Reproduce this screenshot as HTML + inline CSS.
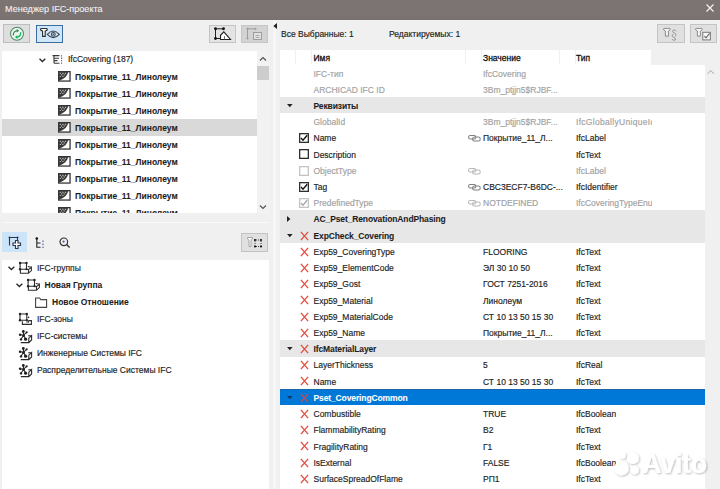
<!DOCTYPE html><html><head><meta charset="utf-8"><title>IFC</title><style>
*{margin:0;padding:0;box-sizing:border-box}
html,body{width:720px;height:489px;overflow:hidden;background:#f0f0f0;font-family:"Liberation Sans",sans-serif;font-size:8.5px;color:#1e1e1e}
.a{position:absolute}
.t{position:absolute;white-space:nowrap;line-height:12px;-webkit-text-stroke:0.16px currentColor}
.b{font-weight:bold;-webkit-text-stroke:0.06px currentColor}
.g{color:#a2a2a2}
svg{position:absolute;overflow:visible}
</style></head><body>
<div class="a" style="left:0;top:0;width:720px;height:19.5px;background:linear-gradient(#7c7473 0,#7b7372 15px,#767270 19.5px)"></div>
<div class="t " style="left:5px;top:3px;color:#f2f2f2;font-size:9.1px;-webkit-text-stroke:0.1px #f2f2f2">Менеджер IFC-проекта</div>
<svg style="left:706px;top:4px" width="8" height="8"><path d="M0.5 0.5L7.5 7.5M7.5 0.5L0.5 7.5" stroke="#f4f4f4" stroke-width="1.2"/></svg>
<div class="a" style="left:3px;top:24px;width:27px;height:19px;background:#dedede;border:1px solid #bdbdbd"></div>
<div class="a" style="left:35.5px;top:24.5px;width:27.2px;height:18.5px;background:#d0e7f9;border:1.4px solid #3d6d9e"></div>
<div class="a" style="left:209px;top:24.5px;width:27px;height:18.5px;background:#e4e4e4;border:1px solid #c4c4c4"></div>
<div class="a" style="left:241px;top:24.5px;width:27px;height:18.5px;background:#d3d3d3;border:1px solid #c6c6c6"></div>
<svg style="left:10px;top:27px" width="14" height="14"><circle cx="7" cy="6.8" r="6.5" fill="#e8f6ec" stroke="#4a8a64" stroke-width="1.05"/><path d="M3.3 8.6 Q3.2 4.1 7 3.7" fill="none" stroke="#3b7d55" stroke-width="1.15"/><path d="M6.7 2L9.2 3.7L6.7 5.4Z" fill="#3b7d55"/><path d="M10.7 5.2 Q10.8 9.6 7.2 10.1" fill="none" stroke="#17b25a" stroke-width="1.35"/><path d="M7.5 8.3L4.9 10.1L7.5 11.9Z" fill="#17b25a"/></svg>
<svg style="left:39.5px;top:28px" width="21" height="11"><path d="M0.6 1.2Q0.6 0.5 1.4 0.5H6.4Q7.2 0.5 7.2 1.2V2L5.2 3.2V8.3H2.6V3.2L0.6 2Z" fill="#fff" stroke="#2e2e2e" stroke-width="1.15"/><path d="M7.3 6.3Q13.2 -0.4 19.3 6.3Q13.2 12.9 7.3 6.3Z" fill="none" stroke="#3a4350" stroke-width="1.15"/><circle cx="13.3" cy="6.3" r="1.9" fill="#dbe9f5" stroke="#3a4350" stroke-width="1.05"/><circle cx="13.3" cy="6.3" r="0.75" fill="#3a4350"/></svg>
<svg style="left:213.5px;top:27px" width="20" height="14"><path d="M1.5 1.8H9.5M1.5 1.8V11.5H6.2" fill="none" stroke="#222" stroke-width="1"/><circle cx="1.5" cy="1.8" r="1.45" fill="#111"/><circle cx="9.5" cy="1.8" r="1.45" fill="#111"/><circle cx="1.5" cy="11.5" r="1.45" fill="#111"/><path d="M6.5 12.5V8.3L9.8 4.8L16.5 12.5Z" fill="#fff" stroke="#222" stroke-width="1.1"/><path d="M10.5 12.5V9" stroke="#555" stroke-width="0.8"/></svg>
<svg style="left:246px;top:27px" width="18" height="14"><path d="M1.5 1.8H9.5M1.5 1.8V11.5" fill="none" stroke="#9e9e9e" stroke-width="1"/><circle cx="1.5" cy="1.8" r="1" fill="#9a9a9a"/><circle cx="9.5" cy="1.8" r="1" fill="#9a9a9a"/><circle cx="1.5" cy="11.5" r="1" fill="#9a9a9a"/><rect x="7.5" y="5.5" width="8" height="7" fill="#e2e2e2" stroke="#9e9e9e"/><path d="M9.5 8.5H13.5M9.5 10.5H13.5" stroke="#aaa"/></svg>
<div class="a" style="left:2px;top:51px;width:255px;height:162px;background:#fff"></div>
<div class="a" style="left:257px;top:51px;width:12px;height:162px;background:#f2f2f2"></div>
<div class="a" style="left:257px;top:66px;width:12px;height:14px;background:#cdcdcd"></div>
<svg style="left:259px;top:55.5px" width="8" height="6"><path d="M1 4.5L4 1.5L7 4.5" fill="none" stroke="#555" stroke-width="1.2"/></svg>
<svg style="left:259px;top:204px" width="8" height="6"><path d="M1 1.5L4 4.5L7 1.5" fill="none" stroke="#555" stroke-width="1.2"/></svg>
<div class="a" style="left:2px;top:119px;width:255px;height:17px;background:#d9d9d9"></div>
<svg style="left:39px;top:57.5px" width="7" height="5"><path d="M0.5 0.7L3.4 3.6L6.3 0.7" fill="none" stroke="#2a2a2a" stroke-width="1.35"/></svg>
<svg style="left:51.5px;top:55px" width="11" height="9"><path d="M0.5 0.6H7.5M2 0.6V8.2M2 3.2H7M2 5.6H5.5M2 8.2H7.5" fill="none" stroke="#3a3a3a" stroke-width="1.1"/><path d="M9.6 0.2V9" stroke="#4a5a9a" stroke-width="1.1" stroke-dasharray="1.3 1.1"/></svg>
<div class="t " style="left:68px;top:53px;">IfcCovering (187)</div>
<svg style="left:58px;top:71px" width="13" height="11"><rect x="0.65" y="0.65" width="11.4" height="9.4" fill="#fff" stroke="#363636" stroke-width="1.3"/><path d="M0.7 0.7H10.2Q9.6 6.2 1.8 9.4H0.7Z" fill="#3a3a3a"/><path d="M1.7 1.7h1.2v1.2h-1.2zM4.3 1.7h1.2v1.2h-1.2zM6.9 1.7h1.2v1.2h-1.2zM3 3.3h1.2v1.2h-1.2zM5.6 3.3h1.2v1.2h-1.2zM1.7 4.9h1.2v1.2h-1.2zM4.3 4.9h1.2v1.2h-1.2z" fill="#b8b8b8"/></svg>
<div class="t b" style="left:75px;top:70.5px;">Покрытие_11_Линолеум</div>
<svg style="left:58px;top:88px" width="13" height="11"><rect x="0.65" y="0.65" width="11.4" height="9.4" fill="#fff" stroke="#363636" stroke-width="1.3"/><path d="M0.7 0.7H10.2Q9.6 6.2 1.8 9.4H0.7Z" fill="#3a3a3a"/><path d="M1.7 1.7h1.2v1.2h-1.2zM4.3 1.7h1.2v1.2h-1.2zM6.9 1.7h1.2v1.2h-1.2zM3 3.3h1.2v1.2h-1.2zM5.6 3.3h1.2v1.2h-1.2zM1.7 4.9h1.2v1.2h-1.2zM4.3 4.9h1.2v1.2h-1.2z" fill="#b8b8b8"/></svg>
<div class="t b" style="left:75px;top:87.5px;">Покрытие_11_Линолеум</div>
<svg style="left:58px;top:105px" width="13" height="11"><rect x="0.65" y="0.65" width="11.4" height="9.4" fill="#fff" stroke="#363636" stroke-width="1.3"/><path d="M0.7 0.7H10.2Q9.6 6.2 1.8 9.4H0.7Z" fill="#3a3a3a"/><path d="M1.7 1.7h1.2v1.2h-1.2zM4.3 1.7h1.2v1.2h-1.2zM6.9 1.7h1.2v1.2h-1.2zM3 3.3h1.2v1.2h-1.2zM5.6 3.3h1.2v1.2h-1.2zM1.7 4.9h1.2v1.2h-1.2zM4.3 4.9h1.2v1.2h-1.2z" fill="#b8b8b8"/></svg>
<div class="t b" style="left:75px;top:104.5px;">Покрытие_11_Линолеум</div>
<svg style="left:58px;top:122px" width="13" height="11"><rect x="0.65" y="0.65" width="11.4" height="9.4" fill="#fff" stroke="#363636" stroke-width="1.3"/><path d="M0.7 0.7H10.2Q9.6 6.2 1.8 9.4H0.7Z" fill="#3a3a3a"/><path d="M1.7 1.7h1.2v1.2h-1.2zM4.3 1.7h1.2v1.2h-1.2zM6.9 1.7h1.2v1.2h-1.2zM3 3.3h1.2v1.2h-1.2zM5.6 3.3h1.2v1.2h-1.2zM1.7 4.9h1.2v1.2h-1.2zM4.3 4.9h1.2v1.2h-1.2z" fill="#b8b8b8"/></svg>
<div class="t b" style="left:75px;top:121.5px;">Покрытие_11_Линолеум</div>
<svg style="left:58px;top:139px" width="13" height="11"><rect x="0.65" y="0.65" width="11.4" height="9.4" fill="#fff" stroke="#363636" stroke-width="1.3"/><path d="M0.7 0.7H10.2Q9.6 6.2 1.8 9.4H0.7Z" fill="#3a3a3a"/><path d="M1.7 1.7h1.2v1.2h-1.2zM4.3 1.7h1.2v1.2h-1.2zM6.9 1.7h1.2v1.2h-1.2zM3 3.3h1.2v1.2h-1.2zM5.6 3.3h1.2v1.2h-1.2zM1.7 4.9h1.2v1.2h-1.2zM4.3 4.9h1.2v1.2h-1.2z" fill="#b8b8b8"/></svg>
<div class="t b" style="left:75px;top:138.5px;">Покрытие_11_Линолеум</div>
<svg style="left:58px;top:156px" width="13" height="11"><rect x="0.65" y="0.65" width="11.4" height="9.4" fill="#fff" stroke="#363636" stroke-width="1.3"/><path d="M0.7 0.7H10.2Q9.6 6.2 1.8 9.4H0.7Z" fill="#3a3a3a"/><path d="M1.7 1.7h1.2v1.2h-1.2zM4.3 1.7h1.2v1.2h-1.2zM6.9 1.7h1.2v1.2h-1.2zM3 3.3h1.2v1.2h-1.2zM5.6 3.3h1.2v1.2h-1.2zM1.7 4.9h1.2v1.2h-1.2zM4.3 4.9h1.2v1.2h-1.2z" fill="#b8b8b8"/></svg>
<div class="t b" style="left:75px;top:155.5px;">Покрытие_11_Линолеум</div>
<svg style="left:58px;top:173px" width="13" height="11"><rect x="0.65" y="0.65" width="11.4" height="9.4" fill="#fff" stroke="#363636" stroke-width="1.3"/><path d="M0.7 0.7H10.2Q9.6 6.2 1.8 9.4H0.7Z" fill="#3a3a3a"/><path d="M1.7 1.7h1.2v1.2h-1.2zM4.3 1.7h1.2v1.2h-1.2zM6.9 1.7h1.2v1.2h-1.2zM3 3.3h1.2v1.2h-1.2zM5.6 3.3h1.2v1.2h-1.2zM1.7 4.9h1.2v1.2h-1.2zM4.3 4.9h1.2v1.2h-1.2z" fill="#b8b8b8"/></svg>
<div class="t b" style="left:75px;top:172.5px;">Покрытие_11_Линолеум</div>
<svg style="left:58px;top:190px" width="13" height="11"><rect x="0.65" y="0.65" width="11.4" height="9.4" fill="#fff" stroke="#363636" stroke-width="1.3"/><path d="M0.7 0.7H10.2Q9.6 6.2 1.8 9.4H0.7Z" fill="#3a3a3a"/><path d="M1.7 1.7h1.2v1.2h-1.2zM4.3 1.7h1.2v1.2h-1.2zM6.9 1.7h1.2v1.2h-1.2zM3 3.3h1.2v1.2h-1.2zM5.6 3.3h1.2v1.2h-1.2zM1.7 4.9h1.2v1.2h-1.2zM4.3 4.9h1.2v1.2h-1.2z" fill="#b8b8b8"/></svg>
<div class="t b" style="left:75px;top:189.5px;">Покрытие_11_Линолеум</div>
<svg style="left:58px;top:207px" width="13" height="11"><rect x="0.65" y="0.65" width="11.4" height="9.4" fill="#fff" stroke="#363636" stroke-width="1.3"/><path d="M0.7 0.7H10.2Q9.6 6.2 1.8 9.4H0.7Z" fill="#3a3a3a"/><path d="M1.7 1.7h1.2v1.2h-1.2zM4.3 1.7h1.2v1.2h-1.2zM6.9 1.7h1.2v1.2h-1.2zM3 3.3h1.2v1.2h-1.2zM5.6 3.3h1.2v1.2h-1.2zM1.7 4.9h1.2v1.2h-1.2zM4.3 4.9h1.2v1.2h-1.2z" fill="#b8b8b8"/></svg>
<div class="t b" style="left:75px;top:206.5px;">Покрытие_11_Линолеум</div>
<div class="a" style="left:0;top:213px;width:269px;height:47px;background:#f0f0f0"></div>
<div class="a" style="left:2px;top:222px;width:267px;height:1px;background:#f9f9f9"></div>
<div class="a" style="left:2px;top:232px;width:25px;height:20px;background:#cce4f7"></div>
<svg style="left:8px;top:235.5px" width="14" height="14"><path d="M1.5 9.5V1.5H9.5V4.5" fill="none" stroke="#2a3550" stroke-width="1.1"/><circle cx="1.5" cy="1.5" r="0.9" fill="#2a3550"/><circle cx="9.5" cy="1.5" r="0.9" fill="#2a3550"/><path d="M7.5 4.5H10V7H12.5V9.5H10V12.5H7.5V9.5H5V7H7.5Z" fill="#fff" stroke="#2a3550" stroke-width="1.1"/></svg>
<svg style="left:35px;top:236.5px" width="10" height="12"><circle cx="1.8" cy="1.5" r="1.3" fill="#111"/><path d="M1.8 1.5V10.3H5.5M1.8 6H5.5" fill="none" stroke="#222" stroke-width="1.1"/><path d="M8 3.5V5M8 6.5V8M8 9.5V11" stroke="#4a5aa0" stroke-width="1.1"/></svg>
<svg style="left:58.5px;top:236.5px" width="12" height="12"><circle cx="4.8" cy="4.8" r="3.8" fill="none" stroke="#333" stroke-width="1.2"/><circle cx="4.6" cy="4.6" r="1.1" fill="#4a5aa0"/><path d="M7.6 7.6L10.6 10.6" stroke="#333" stroke-width="1.4"/></svg>
<div class="a" style="left:241px;top:233px;width:27px;height:18.5px;background:#e0e0e0;border:1px solid #c2c2c2"></div>
<svg style="left:247px;top:236.5px" width="16" height="12"><path d="M0.5 0.5H5.5V2L4 3.2V9.5H2V3.2L0.5 2Z" fill="#f6f6f6" stroke="#a0a0a0" stroke-width="0.9"/><path d="M9 3H13.5M9 9.5H13.5M8 4V8.5M14 4V8.5" stroke="#333" stroke-width="0.9" stroke-dasharray="1 1"/><circle cx="8" cy="3" r="1.1" fill="#111"/><circle cx="14" cy="3" r="1.1" fill="#111"/><circle cx="8" cy="9.5" r="1.1" fill="#111"/><circle cx="14" cy="9.5" r="1.1" fill="#111"/></svg>
<div class="a" style="left:2px;top:260px;width:267px;height:229px;background:#fff"></div>
<svg style="left:8.2px;top:266.0px" width="7" height="5"><path d="M0.5 0.7L3.4 3.6L6.3 0.7" fill="none" stroke="#2a2a2a" stroke-width="1.35"/></svg>
<svg style="left:19.3px;top:262.0px" width="14" height="13"><path d="M1.1 1H7.5V7.2H1.1Z" fill="none" stroke="#2e2e2e" stroke-width="1.1"/><circle cx="1.1" cy="1" r="1.2" fill="#222"/><circle cx="7.5" cy="1" r="1.2" fill="#222"/><circle cx="1.1" cy="7.2" r="1.2" fill="#222"/><circle cx="7.5" cy="7.2" r="1.1" fill="#222"/><path d="M1.4 7.2V11.2H9.5V7.6L7.5 7.2M9.5 11.2L12.4 8.6V5.2L9.5 7.6M8.8 4.5L12.4 5.2" fill="none" stroke="#2e2e2e" stroke-width="1.1"/></svg>
<div class="t " style="left:37px;top:262.0px;">IFC-группы</div>
<svg style="left:16.3px;top:283.0px" width="7" height="5"><path d="M0.5 0.7L3.4 3.6L6.3 0.7" fill="none" stroke="#2a2a2a" stroke-width="1.35"/></svg>
<svg style="left:27.2px;top:279.0px" width="14" height="13"><path d="M1.1 1H7.5V7.2H1.1Z" fill="none" stroke="#2e2e2e" stroke-width="1.1"/><circle cx="1.1" cy="1" r="1.2" fill="#222"/><circle cx="7.5" cy="1" r="1.2" fill="#222"/><circle cx="1.1" cy="7.2" r="1.2" fill="#222"/><circle cx="7.5" cy="7.2" r="1.1" fill="#222"/><path d="M1.4 7.2V11.2H9.5V7.6L7.5 7.2M9.5 11.2L12.4 8.6V5.2L9.5 7.6M8.8 4.5L12.4 5.2" fill="none" stroke="#2e2e2e" stroke-width="1.1"/></svg>
<div class="t b" style="left:44.5px;top:279.0px;">Новая Группа</div>
<svg style="left:35px;top:296.5px" width="13" height="11"><path d="M0.6 1H4.6L5.8 2.6H11.6V10.4H0.6Z" fill="#fff" stroke="#444" stroke-width="1.1"/></svg>
<div class="t b" style="left:52px;top:296.0px;">Новое Отношение</div>
<svg style="left:19px;top:313.0px" width="14" height="13"><path d="M1 1H7.8V7.2H1Z" fill="none" stroke="#2e2e2e" stroke-width="1.1"/><circle cx="1" cy="1" r="1.2" fill="#222"/><circle cx="7.8" cy="1" r="1.2" fill="#222"/><circle cx="1" cy="7.2" r="1.2" fill="#222"/><circle cx="7.8" cy="7.2" r="1.1" fill="#222"/><circle cx="9.5" cy="4.4" r="0.8" fill="#333"/><path d="M3.4 8.3V11.4H12.4V7.6H9.5M9.5 7.6V9H7.2" fill="none" stroke="#2e2e2e" stroke-width="1.1"/></svg>
<div class="t " style="left:37px;top:313.0px;">IFC-зоны</div>
<svg style="left:19px;top:330.0px" width="14" height="14"><path d="M4.6 5.2L4.3 1.6M4.6 5.2L7.6 2.4M4.6 5.2L1 4.8M4.6 5.2L2 9.2M4.6 5.2L6.4 8.8" fill="none" stroke="#2a2a2a" stroke-width="1.1"/><circle cx="4.6" cy="5.2" r="1.2" fill="#222"/><circle cx="4.3" cy="1.5" r="1.4" fill="#222"/><circle cx="7.7" cy="2.3" r="1.1" fill="#222"/><circle cx="1.1" cy="4.8" r="1.3" fill="#222"/><circle cx="6.6" cy="9.2" r="1.6" fill="#222"/><circle cx="2" cy="9.4" r="1.2" fill="#222"/><path d="M1.8 12.6H9.8L12.6 10V5.6L9.8 8.2V12.6M9.2 5.8H12.6" fill="none" stroke="#2a2a2a" stroke-width="1.1"/></svg>
<div class="t " style="left:37px;top:330.0px;">IFC-системы</div>
<svg style="left:19px;top:347.0px" width="14" height="14"><path d="M4.6 5.2L4.3 1.6M4.6 5.2L7.6 2.4M4.6 5.2L1 4.8M4.6 5.2L2 9.2M4.6 5.2L6.4 8.8" fill="none" stroke="#2a2a2a" stroke-width="1.1"/><circle cx="4.6" cy="5.2" r="1.2" fill="#222"/><circle cx="4.3" cy="1.5" r="1.4" fill="#222"/><circle cx="7.7" cy="2.3" r="1.1" fill="#222"/><circle cx="1.1" cy="4.8" r="1.3" fill="#222"/><circle cx="6.6" cy="9.2" r="1.6" fill="#222"/><circle cx="2" cy="9.4" r="1.2" fill="#222"/><path d="M1.8 12.6H9.8L12.6 10V5.6L9.8 8.2V12.6M9.2 5.8H12.6" fill="none" stroke="#2a2a2a" stroke-width="1.1"/></svg>
<div class="t " style="left:37px;top:347.0px;">Инженерные Системы IFC</div>
<svg style="left:19px;top:364.0px" width="14" height="14"><path d="M4.6 5.2L4.3 1.6M4.6 5.2L7.6 2.4M4.6 5.2L1 4.8M4.6 5.2L2 9.2M4.6 5.2L6.4 8.8" fill="none" stroke="#2a2a2a" stroke-width="1.1"/><circle cx="4.6" cy="5.2" r="1.2" fill="#222"/><circle cx="4.3" cy="1.5" r="1.4" fill="#222"/><circle cx="7.7" cy="2.3" r="1.1" fill="#222"/><circle cx="1.1" cy="4.8" r="1.3" fill="#222"/><circle cx="6.6" cy="9.2" r="1.6" fill="#222"/><circle cx="2" cy="9.4" r="1.2" fill="#222"/><path d="M1.8 12.6H9.8L12.6 10V5.6L9.8 8.2V12.6M9.2 5.8H12.6" fill="none" stroke="#2a2a2a" stroke-width="1.1"/></svg>
<div class="t " style="left:37px;top:364.0px;">Распределительные Системы IFC</div>
<div class="a" style="left:272.5px;top:19.5px;width:3.5px;height:470px;background:#f6f6f6"></div>
<svg style="left:273px;top:23.2px" width="4" height="6"><path d="M4 0L0.3 3L4 6Z" fill="#222"/></svg>
<div class="t " style="left:281px;top:28px;">Все Выбранные: 1</div>
<div class="t " style="left:389px;top:28px;">Редактируемых: 1</div>
<div class="a" style="left:657px;top:24px;width:28px;height:18.5px;background:#e0e0e0;border:1px solid #c4c4c4"></div>
<div class="a" style="left:690px;top:24px;width:27px;height:18.5px;background:#e0e0e0;border:1px solid #c4c4c4"></div>
<svg style="left:662.5px;top:27.5px" width="18" height="13"><path d="M0.6 0.9Q0.6 0.4 1.2 0.4H6.6Q7.2 0.4 7.2 0.9V1.8L5.4 3V8.2H2.4V3L0.6 1.8Z" fill="#f6f6f6" stroke="#8a8a8a" stroke-width="1"/><path d="M13.2 3.2Q12.6 2 11.2 2Q9.6 2 9.6 3.3Q9.6 4.4 11.3 5Q13 5.6 13 6.8Q13 7.8 11.8 8.2M10.4 6.2Q9.2 6.6 9.2 7.8Q9.2 8.8 11 9.5Q12.6 10.1 12.6 11.1Q12.6 12.3 11 12.3Q9.6 12.3 9.2 11.2" fill="none" stroke="#8c8c8c" stroke-width="0.9"/></svg>
<svg style="left:695px;top:27.5px" width="18" height="13"><path d="M0.6 0.9Q0.6 0.4 1.2 0.4H6.6Q7.2 0.4 7.2 0.9V1.8L5.4 3V8.2H2.4V3L0.6 1.8Z" fill="#f6f6f6" stroke="#8a8a8a" stroke-width="1"/><rect x="7.8" y="4.3" width="7.6" height="7.6" fill="#f6f6f6" stroke="#7a7a7a" stroke-width="1"/><path d="M9.3 8L11 9.9L14.6 5.3" fill="none" stroke="#666" stroke-width="1.1"/></svg>
<div class="a" style="left:280px;top:49.5px;width:371px;height:15px;background:#fff"></div>
<div class="a" style="left:295px;top:50px;width:1px;height:14px;background:#f0f0f0"></div>
<div class="a" style="left:311px;top:50px;width:1px;height:14px;background:#f0f0f0"></div>
<div class="a" style="left:465px;top:50px;width:1px;height:14px;background:#f0f0f0"></div>
<div class="a" style="left:481px;top:50px;width:1px;height:14px;background:#f0f0f0"></div>
<div class="a" style="left:559px;top:50px;width:1px;height:14px;background:#f0f0f0"></div>
<div class="a" style="left:575px;top:50px;width:1px;height:14px;background:#f0f0f0"></div>
<div class="t " style="left:313.5px;top:52px;-webkit-text-stroke:0.28px currentColor;color:#111">Имя</div>
<div class="t " style="left:483px;top:52px;-webkit-text-stroke:0.28px currentColor;color:#111">Значение</div>
<div class="t " style="left:576px;top:52px;-webkit-text-stroke:0.28px currentColor;color:#111">Тип</div>
<div class="a" style="left:280px;top:64.5px;width:424.5px;height:425px;background:#fff;overflow:hidden">
<div class="t g" style="left:33.5px;top:3.0px">IFC-тип</div>
<div class="t g" style="left:203px;top:3.0px">IfcCovering</div>
<div class="t g" style="left:33.5px;top:19.22px">ARCHICAD IFC ID</div>
<div class="t g" style="left:203px;top:19.22px">3Bm_ptjjn5$RJBF...</div>
<div class="a" style="left:0;top:32.44px;width:425px;height:16.52px;background:#e7e7e7"></div>
<svg style="left:6.6px;top:39.64px" width="6" height="4"><path d="M0 0H5.6L2.8 3.3Z" fill="#222"/></svg>
<div class="t b" style="left:33.5px;top:35.44px;letter-spacing:-0.12px;">Реквизиты</div>
<div class="t g" style="left:33.5px;top:51.66px">GlobalId</div>
<div class="t g" style="left:203px;top:51.66px">3Bm_ptjjn5$RJBF...</div>
<div class="t g" style="left:296px;top:51.66px;width:75.5px;overflow:hidden;letter-spacing:0.3px">IfcGloballyUniqueId</div>
<svg style="left:19.2px;top:68.68px" width="10" height="10"><rect x="0.65" y="0.65" width="8.7" height="8.7" fill="#fff" stroke="#2e2e2e" stroke-width="1.3"/><path d="M2 5L4 7.2L8.2 2.3" fill="none" stroke="#111" stroke-width="1.4"/></svg>
<div class="t " style="left:33.5px;top:67.88px">Name</div>
<svg style="left:188px;top:70.68px" width="13" height="7"><rect x="0.6" y="0.5" width="7.2" height="3.5" rx="1.6" fill="none" stroke="#808080" stroke-width="1.05"/><rect x="4.6" y="2" width="7.6" height="3.9" rx="1.7" fill="none" stroke="#808080" stroke-width="1.05"/></svg>
<div class="t " style="left:203px;top:67.88px">Покрытие_11_Л...</div>
<div class="t " style="left:296px;top:67.88px;width:75.5px;overflow:hidden;">IfcLabel</div>
<svg style="left:19.2px;top:84.9px" width="10" height="10"><rect x="0.65" y="0.65" width="8.7" height="8.7" fill="#fff" stroke="#2e2e2e" stroke-width="1.3"/></svg>
<div class="t " style="left:33.5px;top:84.1px">Description</div>
<div class="t " style="left:296px;top:84.1px;width:75.5px;overflow:hidden;">IfcText</div>
<svg style="left:19.2px;top:101.12px" width="10" height="10"><rect x="0.65" y="0.65" width="8.7" height="8.7" fill="#fff" stroke="#c4c4c4" stroke-width="1.3"/></svg>
<div class="t g" style="left:33.5px;top:100.32px">ObjectType</div>
<svg style="left:188px;top:103.12px" width="13" height="7"><rect x="0.6" y="0.5" width="7.2" height="3.5" rx="1.6" fill="none" stroke="#b8b8b8" stroke-width="1.05"/><rect x="4.6" y="2" width="7.6" height="3.9" rx="1.7" fill="none" stroke="#b8b8b8" stroke-width="1.05"/></svg>
<div class="t g" style="left:296px;top:100.32px;width:75.5px;overflow:hidden;">IfcLabel</div>
<svg style="left:19.2px;top:117.34px" width="10" height="10"><rect x="0.65" y="0.65" width="8.7" height="8.7" fill="#fff" stroke="#2e2e2e" stroke-width="1.3"/><path d="M2 5L4 7.2L8.2 2.3" fill="none" stroke="#111" stroke-width="1.4"/></svg>
<div class="t " style="left:33.5px;top:116.54px">Tag</div>
<svg style="left:188px;top:119.34px" width="13" height="7"><rect x="0.6" y="0.5" width="7.2" height="3.5" rx="1.6" fill="none" stroke="#808080" stroke-width="1.05"/><rect x="4.6" y="2" width="7.6" height="3.9" rx="1.7" fill="none" stroke="#808080" stroke-width="1.05"/></svg>
<div class="t " style="left:203px;top:116.54px">CBC3ECF7-B6DC-...</div>
<div class="t " style="left:296px;top:116.54px;width:75.5px;overflow:hidden;">IfcIdentifier</div>
<svg style="left:19.2px;top:133.56px" width="10" height="10"><rect x="0.65" y="0.65" width="8.7" height="8.7" fill="#fff" stroke="#c4c4c4" stroke-width="1.3"/><path d="M2 5L4 7.2L8.2 2.3" fill="none" stroke="#a8a8a8" stroke-width="1.4"/></svg>
<div class="t g" style="left:33.5px;top:132.76px">PredefinedType</div>
<svg style="left:188px;top:135.56px" width="13" height="7"><rect x="0.6" y="0.5" width="7.2" height="3.5" rx="1.6" fill="none" stroke="#b8b8b8" stroke-width="1.05"/><rect x="4.6" y="2" width="7.6" height="3.9" rx="1.7" fill="none" stroke="#b8b8b8" stroke-width="1.05"/></svg>
<div class="t g" style="left:203px;top:132.76px">NOTDEFINED</div>
<div class="t g" style="left:296px;top:132.76px;width:75.5px;overflow:hidden;">IfcCoveringTypeEnum</div>
<div class="a" style="left:0;top:145.98px;width:425px;height:16.52px;background:#e7e7e7"></div>
<svg style="left:7.2px;top:151.18px" width="4" height="6"><path d="M0 0V6L3.4 3Z" fill="#222"/></svg>
<div class="t b" style="left:33.5px;top:148.98px;letter-spacing:-0.12px;">AC_Pset_RenovationAndPhasing</div>
<div class="a" style="left:0;top:162.2px;width:425px;height:16.52px;background:#e7e7e7"></div>
<svg style="left:6.6px;top:169.4px" width="6" height="4"><path d="M0 0H5.6L2.8 3.3Z" fill="#222"/></svg>
<svg style="left:20px;top:166.0px" width="9" height="10"><path d="M0.9 0.9L8.1 9.1M8.1 0.9L0.9 9.1" stroke="#e4503f" stroke-width="1.4"/></svg>
<div class="t b" style="left:33.5px;top:165.2px;letter-spacing:-0.12px;">ExpCheck_Covering</div>
<svg style="left:20px;top:182.22px" width="9" height="10"><path d="M0.9 0.9L8.1 9.1M8.1 0.9L0.9 9.1" stroke="#e4503f" stroke-width="1.4"/></svg>
<div class="t " style="left:33.5px;top:181.42px">Exp59_CoveringType</div>
<div class="t " style="left:203px;top:181.42px">FLOORING</div>
<div class="t " style="left:296px;top:181.42px;width:75.5px;overflow:hidden;">IfcText</div>
<svg style="left:20px;top:198.44px" width="9" height="10"><path d="M0.9 0.9L8.1 9.1M8.1 0.9L0.9 9.1" stroke="#e4503f" stroke-width="1.4"/></svg>
<div class="t " style="left:33.5px;top:197.64px">Exp59_ElementCode</div>
<div class="t " style="left:203px;top:197.64px">ЭЛ 30 10 50</div>
<div class="t " style="left:296px;top:197.64px;width:75.5px;overflow:hidden;">IfcText</div>
<svg style="left:20px;top:214.66px" width="9" height="10"><path d="M0.9 0.9L8.1 9.1M8.1 0.9L0.9 9.1" stroke="#e4503f" stroke-width="1.4"/></svg>
<div class="t " style="left:33.5px;top:213.86px">Exp59_Gost</div>
<div class="t " style="left:203px;top:213.86px">ГОСТ 7251-2016</div>
<div class="t " style="left:296px;top:213.86px;width:75.5px;overflow:hidden;">IfcText</div>
<svg style="left:20px;top:230.88px" width="9" height="10"><path d="M0.9 0.9L8.1 9.1M8.1 0.9L0.9 9.1" stroke="#e4503f" stroke-width="1.4"/></svg>
<div class="t " style="left:33.5px;top:230.08px">Exp59_Material</div>
<div class="t " style="left:203px;top:230.08px">Линолеум</div>
<div class="t " style="left:296px;top:230.08px;width:75.5px;overflow:hidden;">IfcText</div>
<svg style="left:20px;top:247.1px" width="9" height="10"><path d="M0.9 0.9L8.1 9.1M8.1 0.9L0.9 9.1" stroke="#e4503f" stroke-width="1.4"/></svg>
<div class="t " style="left:33.5px;top:246.3px">Exp59_MaterialCode</div>
<div class="t " style="left:203px;top:246.3px">СТ 10 13 50 15 30</div>
<div class="t " style="left:296px;top:246.3px;width:75.5px;overflow:hidden;">IfcText</div>
<svg style="left:20px;top:263.32px" width="9" height="10"><path d="M0.9 0.9L8.1 9.1M8.1 0.9L0.9 9.1" stroke="#e4503f" stroke-width="1.4"/></svg>
<div class="t " style="left:33.5px;top:262.52px">Exp59_Name</div>
<div class="t " style="left:203px;top:262.52px">Покрытие_11_Л...</div>
<div class="t " style="left:296px;top:262.52px;width:75.5px;overflow:hidden;">IfcText</div>
<div class="a" style="left:0;top:275.74px;width:425px;height:16.52px;background:#e7e7e7"></div>
<svg style="left:6.6px;top:282.94px" width="6" height="4"><path d="M0 0H5.6L2.8 3.3Z" fill="#222"/></svg>
<svg style="left:20px;top:279.54px" width="9" height="10"><path d="M0.9 0.9L8.1 9.1M8.1 0.9L0.9 9.1" stroke="#e4503f" stroke-width="1.4"/></svg>
<div class="t b" style="left:33.5px;top:278.74px;letter-spacing:-0.12px;">IfcMaterialLayer</div>
<svg style="left:20px;top:295.76px" width="9" height="10"><path d="M0.9 0.9L8.1 9.1M8.1 0.9L0.9 9.1" stroke="#e4503f" stroke-width="1.4"/></svg>
<div class="t " style="left:33.5px;top:294.96px">LayerThickness</div>
<div class="t " style="left:203px;top:294.96px">5</div>
<div class="t " style="left:296px;top:294.96px;width:75.5px;overflow:hidden;">IfcReal</div>
<svg style="left:20px;top:311.98px" width="9" height="10"><path d="M0.9 0.9L8.1 9.1M8.1 0.9L0.9 9.1" stroke="#e4503f" stroke-width="1.4"/></svg>
<div class="t " style="left:33.5px;top:311.18px">Name</div>
<div class="t " style="left:203px;top:311.18px">СТ 10 13 50 15 30</div>
<div class="t " style="left:296px;top:311.18px;width:75.5px;overflow:hidden;">IfcText</div>
<div class="a" style="left:0;top:324.4px;width:425px;height:16.52px;background:#0078d7"></div>
<div class="a" style="left:0;top:324.4px;width:425px;height:1px;background:#1565b0"></div>
<svg style="left:6.6px;top:331.6px" width="6" height="4"><path d="M0 0H5.6L2.8 3.3Z" fill="#143a6a"/></svg>
<svg style="left:20px;top:328.2px" width="9" height="10"><path d="M0.9 0.9L8.1 9.1M8.1 0.9L0.9 9.1" stroke="#cf4a44" stroke-width="1.4"/></svg>
<div class="t b" style="left:33.5px;top:327.4px;letter-spacing:-0.12px;color:#fff;">Pset_CoveringCommon</div>
<svg style="left:20px;top:344.42px" width="9" height="10"><path d="M0.9 0.9L8.1 9.1M8.1 0.9L0.9 9.1" stroke="#e4503f" stroke-width="1.4"/></svg>
<div class="t " style="left:33.5px;top:343.62px">Combustible</div>
<div class="t " style="left:203px;top:343.62px">TRUE</div>
<div class="t " style="left:296px;top:343.62px;width:75.5px;overflow:hidden;">IfcBoolean</div>
<svg style="left:20px;top:360.64px" width="9" height="10"><path d="M0.9 0.9L8.1 9.1M8.1 0.9L0.9 9.1" stroke="#e4503f" stroke-width="1.4"/></svg>
<div class="t " style="left:33.5px;top:359.84px">FlammabilityRating</div>
<div class="t " style="left:203px;top:359.84px">B2</div>
<div class="t " style="left:296px;top:359.84px;width:75.5px;overflow:hidden;">IfcText</div>
<svg style="left:20px;top:376.86px" width="9" height="10"><path d="M0.9 0.9L8.1 9.1M8.1 0.9L0.9 9.1" stroke="#e4503f" stroke-width="1.4"/></svg>
<div class="t " style="left:33.5px;top:376.06px">FragilityRating</div>
<div class="t " style="left:203px;top:376.06px">Г1</div>
<div class="t " style="left:296px;top:376.06px;width:75.5px;overflow:hidden;">IfcText</div>
<svg style="left:20px;top:393.08px" width="9" height="10"><path d="M0.9 0.9L8.1 9.1M8.1 0.9L0.9 9.1" stroke="#e4503f" stroke-width="1.4"/></svg>
<div class="t " style="left:33.5px;top:392.28px">IsExternal</div>
<div class="t " style="left:203px;top:392.28px">FALSE</div>
<div class="t " style="left:296px;top:392.28px;width:75.5px;overflow:hidden;">IfcBoolean</div>
<svg style="left:20px;top:409.3px" width="9" height="10"><path d="M0.9 0.9L8.1 9.1M8.1 0.9L0.9 9.1" stroke="#e4503f" stroke-width="1.4"/></svg>
<div class="t " style="left:33.5px;top:408.5px">SurfaceSpreadOfFlame</div>
<div class="t " style="left:203px;top:408.5px">РП1</div>
<div class="t " style="left:296px;top:408.5px;width:75.5px;overflow:hidden;">IfcText</div>
</div>
<div class="a" style="left:704.5px;top:64.5px;width:15.5px;height:425px;background:#f0f0f0"></div>
<svg style="left:707px;top:70px" width="8" height="5"><path d="M0.5 3.8L3.8 0.6L7 3.8" fill="none" stroke="#a4a4a4" stroke-width="1"/></svg>
<svg style="left:610px;top:448px" width="104" height="32"><defs><filter id="sh" x="-20%" y="-20%" width="140%" height="140%"><feGaussianBlur in="SourceAlpha" stdDeviation="1.2"/><feOffset dx="0.5" dy="1" result="o"/><feComponentTransfer><feFuncA type="linear" slope="0.3"/></feComponentTransfer><feMerge><feMergeNode/><feMergeNode in="SourceGraphic"/></feMerge></filter></defs><g filter="url(#sh)" fill="#ffffff" opacity="0.92"><circle cx="11.5" cy="20.2" r="7.3"/><circle cx="24.7" cy="22" r="4.3"/><circle cx="12.9" cy="7.4" r="3.1"/><circle cx="23" cy="10.2" r="5.9"/><text x="32" y="24.5" font-family="Liberation Sans" font-weight="bold" font-size="27" letter-spacing="-0.3">Avito</text></g></svg>
</body></html>
